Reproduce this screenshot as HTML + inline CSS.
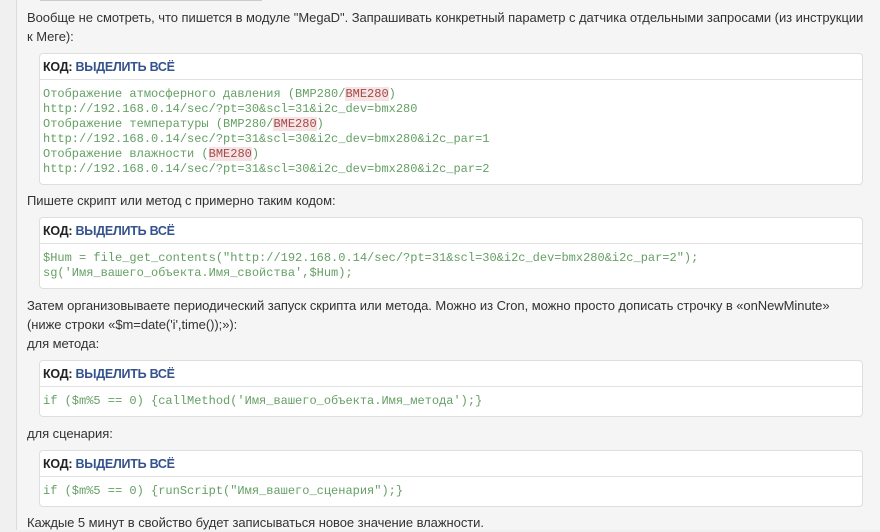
<!DOCTYPE html>
<html><head><meta charset="utf-8"><style>
html,body{margin:0;padding:0;}
body{width:880px;height:530px;overflow:hidden;background:#f0f0f0;position:relative;font-family:"Liberation Sans","DejaVu Sans",sans-serif;}
.main{position:absolute;left:16px;top:0;width:864px;height:530px;background:#f5f5f5;border-left:1px solid #dcdcdc;}
.t{position:absolute;left:27px;font-size:13px;color:#333;line-height:19px;white-space:nowrap;letter-spacing:-0.05px;}
.box{position:absolute;left:39px;width:822px;background:#fff;border:1px solid #dedede;border-radius:4px;}
.hd{height:25px;border-bottom:1px solid #e2e2e2;font-size:12.5px;font-weight:bold;line-height:26px;padding-left:3px;color:#222;letter-spacing:-0.25px;}
.hd span{color:#34528c;}
.cd{font-family:"Liberation Mono",monospace;font-size:12px;line-height:15px;color:#65a065;padding:7px 0 6px 3px;white-space:pre;}
.hl{background:#f6e4e4;color:#a54848;}
.top{position:absolute;left:40px;top:0;width:222px;height:1px;background:#ccc;}
</style></head><body>
<div class="main"></div>
<div class="top"></div>
<div class="t" style="top:8px">Вообще не смотреть, что пишется в модуле "MegaD". Запрашивать конкретный параметр с датчика отдельными запросами (из инструкции</div>
<div class="t" style="top:27px">к Меге):</div>
<div class="box" style="top:53px;height:130px"><div class="hd">КОД: <span>ВЫДЕЛИТЬ ВСЁ</span></div><div class="cd">Отображение атмосферного давления (BMP280/<span class="hl">BME280</span>)
http://192.168.0.14/sec/?pt=30&amp;scl=31&amp;i2c_dev=bmx280
Отображение температуры (BMP280/<span class="hl">BME280</span>)
http://192.168.0.14/sec/?pt=31&amp;scl=30&amp;i2c_dev=bmx280&amp;i2c_par=1
Отображение влажности (<span class="hl">BME280</span>)
http://192.168.0.14/sec/?pt=31&amp;scl=30&amp;i2c_dev=bmx280&amp;i2c_par=2</div></div>
<div class="t" style="top:191px">Пишете скрипт или метод с примерно таким кодом:</div>
<div class="box" style="top:217px;height:70px"><div class="hd">КОД: <span>ВЫДЕЛИТЬ ВСЁ</span></div><div class="cd">$Hum = file_get_contents("http://192.168.0.14/sec/?pt=31&amp;scl=30&amp;i2c_dev=bmx280&amp;i2c_par=2");
sg('Имя_вашего_объекта.Имя_свойства',$Hum);</div></div>
<div class="t" style="top:296px">Затем организовываете периодический запуск скрипта или метода. Можно из Cron, можно просто дописать строчку в «onNewMinute»</div>
<div class="t" style="top:315px">(ниже строки «$m=date('i',time());»):</div>
<div class="t" style="top:334px">для метода:</div>
<div class="box" style="top:360px;height:55px"><div class="hd">КОД: <span>ВЫДЕЛИТЬ ВСЁ</span></div><div class="cd">if ($m%5 == 0) {callMethod('Имя_вашего_объекта.Имя_метода');}</div></div>
<div class="t" style="top:424px">для сценария:</div>
<div class="box" style="top:450px;height:55px"><div class="hd">КОД: <span>ВЫДЕЛИТЬ ВСЁ</span></div><div class="cd">if ($m%5 == 0) {runScript("Имя_вашего_сценария");}</div></div>
<div class="t" style="top:513px">Каждые 5 минут в свойство будет записываться новое значение влажности.</div>
</body></html>
